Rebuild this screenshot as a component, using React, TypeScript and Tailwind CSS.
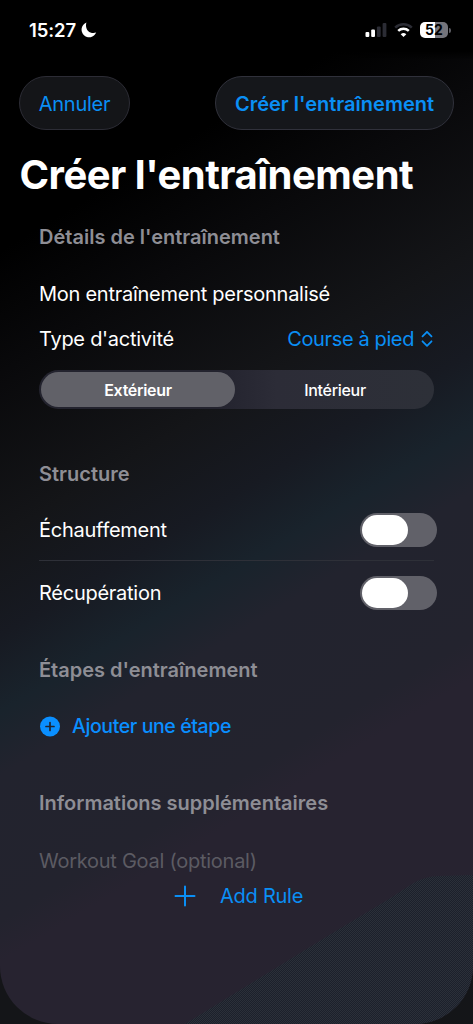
import { useState } from "react";
import clsx from "clsx";

const surfaces = ["Extérieur", "Intérieur"];

function StatusBar() {
	return (
		<div className="flex h-[60px] items-center justify-between bg-[linear-gradient(180deg,#000_85%,transparent)] pl-[29px] pr-[22px] text-white">
			<div className="flex items-center gap-[5px]">
				<span className="text-[18.5px] font-semibold leading-6 tracking-[-0.1px]">
					15:27
				</span>
				<svg width="16" height="16" viewBox="0 0 16 16" fill="currentColor">
					<path d="M5.4.6A7.6 7.6 0 1 0 15.2 10.6C9 12.6 3.4 7.6 5.4.6Z" />
				</svg>
			</div>
			<div className="flex items-center gap-[7px]">
				<svg width="22" height="14" viewBox="0 0 22 14" fill="currentColor">
					<rect x="0.5" y="9" width="3.8" height="5" rx="1.1" />
					<rect x="6.2" y="6.5" width="3.8" height="7.5" rx="1.1" />
					<rect x="11.9" y="3.5" width="3.8" height="10.5" rx="1.1" fill="#2b2c34" />
					<rect x="17.6" y="0" width="3.8" height="14" rx="1.1" fill="#2b2c34" />
				</svg>
				<svg width="19" height="14" viewBox="0 0 19 14" fill="none">
					<path d="M1.2 4.6a12 12 0 0 1 16.6 0" stroke="#2b2c34" strokeWidth="2.5" />
					<path d="M4.2 7.8a7.7 7.7 0 0 1 10.6 0" stroke="#fff" strokeWidth="2.5" />
					<path d="m9.5 14-2.8-2.8a4.1 4.1 0 0 1 5.6 0Z" fill="#fff" />
				</svg>
				<div className="flex items-center gap-px">
					<div className="flex h-4 w-7 items-center justify-center rounded-[5px] bg-[linear-gradient(90deg,#fff_52%,#74747b_52%)] text-[14px] font-bold leading-none tracking-normal text-black">
						52
					</div>
					<div className="h-[5px] w-[2px] rounded-r-full bg-[#5c5c63]" />
				</div>
			</div>
		</div>
	);
}

function SectionTitle({ children }: { children: string }) {
	return (
		<h2 className="text-[20px] font-semibold leading-6 tracking-normal text-[#8e8e95]">
			{children}
		</h2>
	);
}

function Toggle({ label }: { label: string }) {
	const [on, setOn] = useState(false);

	return (
		<div className="flex h-[63px] items-center justify-between">
			<span>{label}</span>
			<button
				type="button"
				role="switch"
				aria-checked={on}
				aria-label={label}
				onClick={() => setOn(!on)}
				className={clsx(
					"-mr-[3px] flex h-[34px] w-[77px] items-center rounded-full p-[2px]",
					on ? "justify-end bg-[#30d158]" : "bg-[#616169]",
				)}
			>
				<span className="h-[30px] w-[46px] rounded-full bg-white" />
			</button>
		</div>
	);
}

export default function App() {
	const [surface, setSurface] = useState("Extérieur");

	return (
		<div className="h-[1024px] w-[473px] overflow-hidden bg-[#141518] font-['Inter',sans-serif] text-[20px] leading-6 tracking-[-0.26px] text-white">
			<div className="relative h-full overflow-hidden rounded-b-[58px] bg-[linear-gradient(149deg,#000_215px,#09090b_320px,#141518_460px,#171a22_545px,#19232c_610px,#22232e_665px,#23232e_790px,#272330_825px)]">
				<svg
					className="absolute bottom-0 right-0"
					width="288"
					height="149"
					viewBox="0 0 288 149"
				>
					<defs>
						<pattern id="grain" width="2" height="2" patternUnits="userSpaceOnUse">
							<rect width="2" height="2" fill="#1c202b" />
							<rect width="1" height="1" fill="#2b3039" />
							<rect x="1" y="1" width="1" height="1" fill="#2b3039" />
						</pattern>
					</defs>
					<path d="M0 149 146 59 204 24 227 9Q240 1 254 1L288 0V149Z" fill="url(#grain)" />
				</svg>
				<div className="relative">
					<StatusBar />
					<header className="mt-4 flex justify-between px-[19px] text-[#0a8ff5]">
						<button
							type="button"
							className="h-[54px] w-[111px] rounded-full border border-[#2c2c35] bg-[#141518] pt-px"
						>
							Annuler
						</button>
						<button
							type="button"
							className="h-[54px] w-[239px] whitespace-nowrap rounded-full border border-[#30313b] bg-[#15171b] pt-px font-semibold tracking-normal"
						>
							Créer l'entraînement
						</button>
					</header>
					<h1 className="mt-5 whitespace-nowrap pl-[19.5px] text-[40px] font-bold leading-[50px] tracking-[-0.5px]">
						Créer l'entraînement
					</h1>
					<main className="px-[39px] pt-[25px]">
						<SectionTitle>Détails de l'entraînement</SectionTitle>
						<div className="mt-[33px]">Mon entraînement personnalisé</div>
						<div className="mt-[21px] flex items-center justify-between">
							<span>Type d'activité</span>
							<button
								type="button"
								className="flex items-center gap-[7px] tracking-[-0.38px] text-[#0a8ff5]"
							>
								Course à pied
								<svg
									width="13"
									height="18"
									viewBox="0 0 13 18"
									fill="none"
									stroke="currentColor"
									strokeWidth="1.8"
									strokeLinecap="round"
									strokeLinejoin="round"
								>
									<path d="M1.5 6.3 6 1.8l4.5 4.5M1.5 11.3 6 15.8l4.5-4.5" />
								</svg>
							</button>
						</div>
						<div className="mt-[19px] flex h-[39px] rounded-full bg-[linear-gradient(90deg,#23232e_45%,#2c2c37_60%,#2d3038)] p-[2px] tracking-[-0.3px]">
							{surfaces.map((item, i) => (
								<button
									key={item}
									type="button"
									onClick={() => setSurface(item)}
									className={clsx(
										"rounded-full text-[16px]",
										i === 0 ? "w-[194px]" : "flex-1 pl-[3px]",
										surface === item ? "bg-[#616168] font-semibold" : "font-medium",
									)}
								>
									{item}
								</button>
							))}
						</div>
						<div className="mt-[53px]">
							<SectionTitle>Structure</SectionTitle>
						</div>
						<div className="mt-3">
							<Toggle label="Échauffement" />
							<div className="-mt-px h-px bg-[#2e3038]" />
							<Toggle label="Récupération" />
						</div>
						<div className="mt-[34px]">
							<SectionTitle>Étapes d'entraînement</SectionTitle>
						</div>
						<button
							type="button"
							className="mt-8 flex items-center gap-3 text-[19.5px] font-medium tracking-[-0.4px] text-[#0a8fff]"
						>
							<svg width="21" height="21" viewBox="0 0 21 21">
								<circle cx="11" cy="10.5" r="10" fill="currentColor" />
								<path
									d="M11 6.5v8M7 10.5h8"
									stroke="#20242f"
									strokeWidth="1.7"
									strokeLinecap="round"
								/>
							</svg>
							Ajouter une étape
						</button>
						<div className="mt-[53px]">
							<SectionTitle>Informations supplémentaires</SectionTitle>
						</div>
						<div className="mt-[34px] text-[#5c5b63]">Workout Goal (optional)</div>
						<button
							type="button"
							className="ml-[135px] mt-[11px] flex items-center gap-6 text-[#0a8ff5]"
						>
							<svg
								width="22"
								height="22"
								viewBox="0 0 22 22"
								stroke="currentColor"
								strokeWidth="2"
								strokeLinecap="round"
							>
								<path d="M11 1.5v19M1.5 11h19" />
							</svg>
							Add Rule
						</button>
					</main>
				</div>
			</div>
		</div>
	);
}
